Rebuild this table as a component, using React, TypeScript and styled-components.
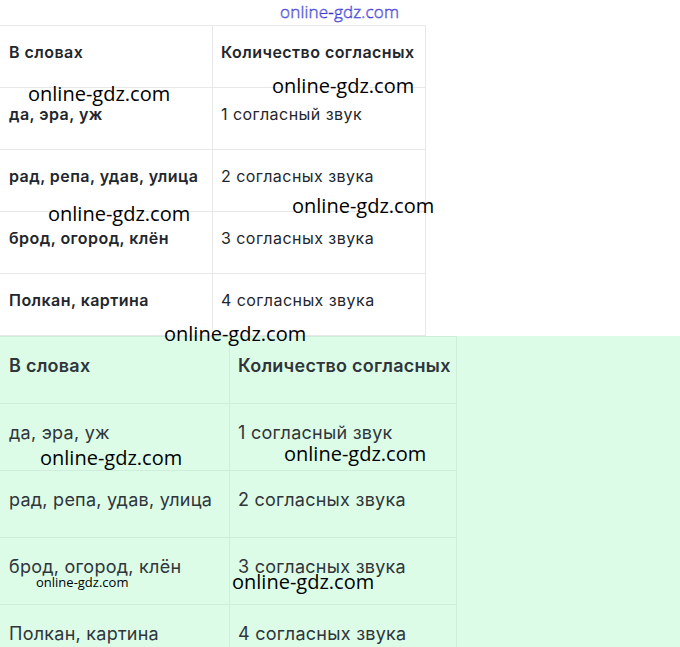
import React from "react";
import styled, { createGlobalStyle } from "styled-components";

const GlobalStyle = createGlobalStyle`
  html, body {
    margin: 0;
    padding: 0;
    background: #ffffff;
  }
  body {
    font-family: Inter, "Noto Sans", sans-serif;
  }
`;

type Variant = "plain" | "mint";

interface Row {
  words: string;
  count: string;
}

const rows: Row[] = [
  { words: "да, эра, уж", count: "1 согласный звук" },
  { words: "рад, репа, удав, улица", count: "2 согласных звука" },
  { words: "брод, огород, клён", count: "3 согласных звука" },
  { words: "Полкан, картина", count: "4 согласных звука" },
];

const Page = styled.div`
  position: relative;
  width: 680px;
  height: 647px;
  overflow: hidden;
`;

const TopBlock = styled.section`
  padding-top: 25px;
`;

const MintBlock = styled.section`
  background: #dcfce8;
  height: 311px;
`;

const Table = styled.table<{ $variant: Variant }>`
  border-collapse: collapse;
  width: ${(p) => (p.$variant === "plain" ? "426px" : "457px")};
  table-layout: fixed;
  color: ${(p) => (p.$variant === "plain" ? "#23262d" : "#30353a")};
  font-size: ${(p) => (p.$variant === "plain" ? "16px" : "18px")};
  letter-spacing: ${(p) => (p.$variant === "plain" ? "0.45px" : "0.25px")};
`;

const Tr = styled.tr<{ $variant: Variant }>`
  height: ${(p) => (p.$variant === "plain" ? "62px" : "67px")};
`;

const Cell = styled.td<{ $variant: Variant; $strong?: boolean }>`
  border: 1px solid ${(p) => (p.$variant === "plain" ? "#e7e8ea" : "#cdeedb")};
  padding: 0 0 9px 8px;
  vertical-align: middle;
  font-weight: ${(p) => (p.$strong ? 600 : 400)};
  white-space: nowrap;
  overflow: hidden;
  &:first-child {
    border-left-color: transparent;
  }
`;

const HeadCell = styled(Cell).attrs({ as: "th" })`
  text-align: left;
  font-weight: 600;
`;

const Mark = styled.span<{ $size?: number }>`
  position: absolute;
  font-family: "Open Sans", "DejaVu Sans", sans-serif;
  font-size: ${(p) => p.$size ?? 20}px;
  line-height: 1;
  color: #000;
  white-space: nowrap;
  pointer-events: none;
`;

const OutlineMark = styled(Mark)`
  font-weight: 300;
  color: #ffffff;
  -webkit-text-stroke: 0.55px #3434d4;
  letter-spacing: 0.2px;
`;

const Column = ({ variant }: { variant: Variant }) => (
  <colgroup>
    <col style={{ width: variant === "plain" ? 212 : 229 }} />
    <col />
  </colgroup>
);

const SoundsTable = ({ variant }: { variant: Variant }) => (
  <Table $variant={variant}>
    <Column variant={variant} />
    <thead>
      <Tr $variant={variant}>
        <HeadCell $variant={variant}>В словах</HeadCell>
        <HeadCell $variant={variant}>Количество согласных</HeadCell>
      </Tr>
    </thead>
    <tbody>
      {rows.map((r) => (
        <Tr $variant={variant} key={r.words}>
          <Cell $variant={variant} $strong={variant === "plain"}>
            {r.words}
          </Cell>
          <Cell $variant={variant}>{r.count}</Cell>
        </Tr>
      ))}
    </tbody>
  </Table>
);

const marks = [
  { x: 28, y: 84 },
  { x: 272, y: 76 },
  { x: 48, y: 204 },
  { x: 292, y: 196 },
  { x: 164, y: 324 },
  { x: 40, y: 448 },
  { x: 284, y: 444 },
  { x: 232, y: 572 },
];

export default function App() {
  return (
    <Page>
      <GlobalStyle />
      <TopBlock>
        <SoundsTable variant="plain" />
      </TopBlock>
      <MintBlock>
        <SoundsTable variant="mint" />
      </MintBlock>

      <OutlineMark $size={17} style={{ left: 280, top: 3 }}>
        online-gdz.com
      </OutlineMark>
      {marks.map((m) => (
        <Mark key={`${m.x}-${m.y}`} style={{ left: m.x, top: m.y }}>
          online-gdz.com
        </Mark>
      ))}
      <Mark $size={13} style={{ left: 36, top: 576 }}>
        online-gdz.com
      </Mark>
    </Page>
  );
}
